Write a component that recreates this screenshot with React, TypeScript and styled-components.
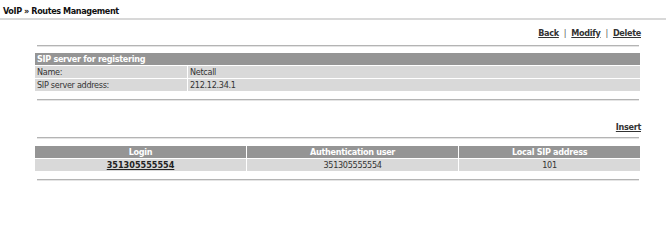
import React from 'react';
import styled, { createGlobalStyle } from 'styled-components';

const GlobalStyle = createGlobalStyle`
  html, body {
    margin: 0;
    padding: 0;
    background: #ffffff;
  }
  body {
    font-family: "DejaVu Sans Condensed", "DejaVu Sans", Verdana, sans-serif;
    font-stretch: condensed;
    font-size: 9px;
    letter-spacing: -0.3px;
    color: #333333;
  }
`;

const Page = styled.div`
  width: 666px;
  height: 207px;
  overflow: hidden;
`;

const TitleBar = styled.div`
  height: 18px;
  box-sizing: border-box;
  padding: 7px 3px 0;
  line-height: 9px;
  font-weight: bold;
  font-size: 9px;
  letter-spacing: -0.4px;
  color: #111111;
  border-bottom: 2px solid #d8d8d8;
  box-sizing: content-box;
  height: 11px;
`;

const Content = styled.div`
  margin-left: 34px;
  width: 607px;
`;

const ActionRow = styled.div<{ $top: number }>`
  display: flex;
  justify-content: flex-end;
  align-items: center;
  gap: 5px;
  height: 11px;
  margin-top: ${p => p.$top}px;
  color: #555555;
`;

const ActionLink = styled.a`
  font-weight: bold;
  color: #333333;
  text-decoration: underline;
`;

const Divider = styled.hr<{ $top: number }>`
  margin: ${p => p.$top}px 2px 0 3px;
  border: none;
  border-top: 1px solid #b4b4b4;
  border-bottom: 1px solid #e4e4e4;
  height: 0;
`;

const DataTable = styled.table<{ $top: number }>`
  width: 607px;
  margin-top: ${p => p.$top}px;
  border-collapse: separate;
  border-spacing: 1px;
  table-layout: fixed;
  font-size: 9px;
`;

const HeadCell = styled.th<{ $align?: string }>`
  background: #959595;
  color: #ffffff;
  font-weight: bold;
  text-align: ${p => p.$align ?? 'left'};
  height: 12px;
  padding: 0 2px;
  line-height: 12px;
`;

const Cell = styled.td<{ $align?: string }>`
  background: #d9d9d9;
  color: #333333;
  text-align: ${p => p.$align ?? 'left'};
  height: 12px;
  padding: 0 2px;
  line-height: 12px;
`;

const CellLink = styled.a`
  font-weight: bold;
  color: #222222;
  letter-spacing: 0;
  text-decoration: underline;
`;

export default function App() {
  return (
    <Page>
      <GlobalStyle />
      <TitleBar>VoIP » Routes Management</TitleBar>
      <Content>
        <ActionRow $top={7}>
          <ActionLink>Back</ActionLink>|<ActionLink>Modify</ActionLink>|<ActionLink>Delete</ActionLink>
        </ActionRow>
        <Divider $top={7} />
        <DataTable $top={5}>
          <colgroup>
            <col style={{ width: 152 }} />
            <col />
          </colgroup>
          <thead>
            <tr>
              <HeadCell colSpan={2}>SIP server for registering</HeadCell>
            </tr>
          </thead>
          <tbody>
            <tr>
              <Cell>Name:</Cell>
              <Cell>Netcall</Cell>
            </tr>
            <tr>
              <Cell>SIP server address:</Cell>
              <Cell>212.12.34.1</Cell>
            </tr>
          </tbody>
        </DataTable>
        <Divider $top={7} />
        <ActionRow $top={20}>
          <ActionLink>Insert</ActionLink>
        </ActionRow>
        <Divider $top={5} />
        <DataTable $top={6}>
          <colgroup>
            <col style={{ width: '35%' }} />
            <col style={{ width: '35%' }} />
            <col style={{ width: '30%' }} />
          </colgroup>
          <thead>
            <tr>
              <HeadCell $align="center">Login</HeadCell>
              <HeadCell $align="center">Authentication user</HeadCell>
              <HeadCell $align="center">Local SIP address</HeadCell>
            </tr>
          </thead>
          <tbody>
            <tr>
              <Cell $align="center"><CellLink>351305555554</CellLink></Cell>
              <Cell $align="center">351305555554</Cell>
              <Cell $align="center">101</Cell>
            </tr>
          </tbody>
        </DataTable>
        <Divider $top={7} />
      </Content>
    </Page>
  );
}
